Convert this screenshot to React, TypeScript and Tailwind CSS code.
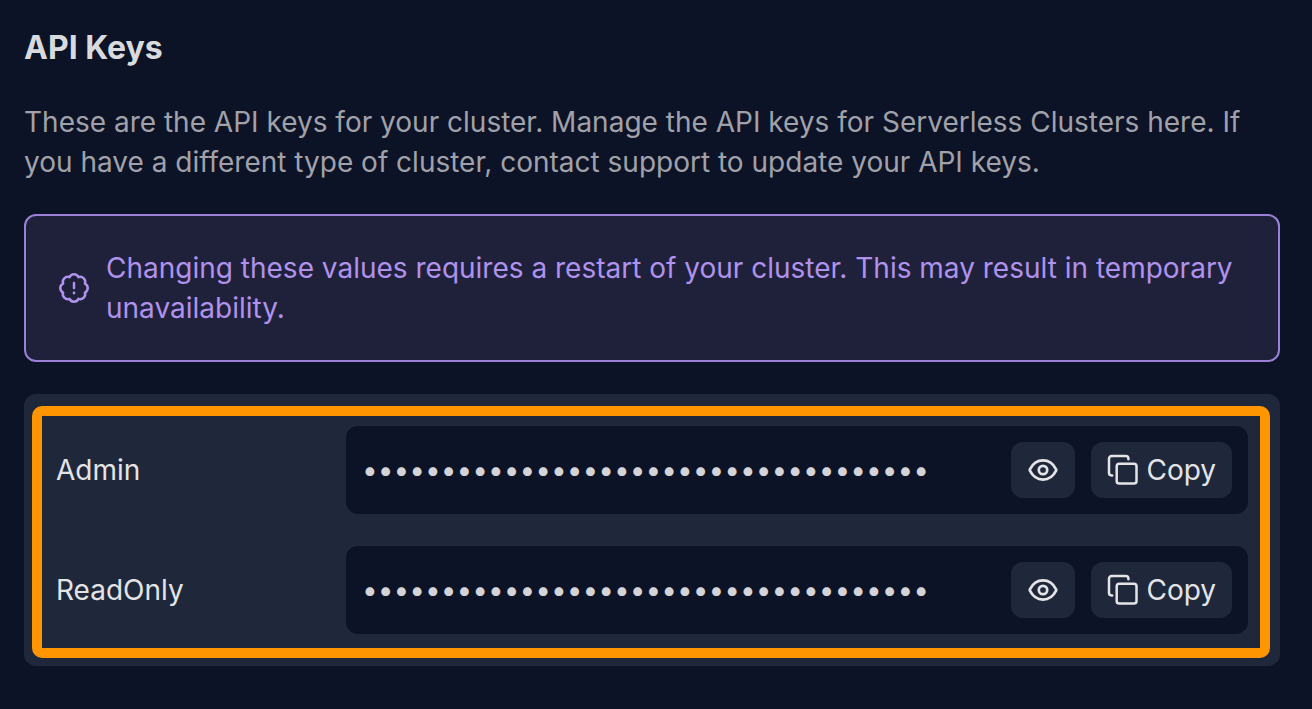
const API_KEYS = [
  { id: "admin", label: "Admin", value: "x".repeat(36) },
  { id: "readonly", label: "ReadOnly", value: "x".repeat(36) },
];

function AlertBadgeIcon() {
  return (
    <svg viewBox="-16 -16 32 32" className="size-8 shrink-0" fill="none" stroke="currentColor" strokeWidth="2.5" strokeLinecap="round" strokeLinejoin="round" aria-hidden="true">
      <path d="M-4.5-10.900A5 5 0 0 1 4.500-10.900A5 5 0 0 1 10.900-4.500A5 5 0 0 1 10.900 4.500A5 5 0 0 1 4.500 10.900A5 5 0 0 1-4.500 10.900A5 5 0 0 1-10.900 4.500A5 5 0 0 1-10.900-4.500A5 5 0 0 1-4.500-10.900Z" />
      <path d="M0-5V0" />
      <path d="M0 5V5.100" strokeWidth="2.8" />
    </svg>
  );
}

function EyeIcon() {
  return (
    <svg viewBox="0 0 32 32" className="size-8" fill="none" stroke="currentColor" strokeWidth="2.700" strokeLinecap="round" strokeLinejoin="round" aria-hidden="true">
      <path d="M2.900 16.700a1.800 1.800 0 0 1 0-1.400C5.600 9.900 10.400 6.400 16 6.400s10.400 3.500 13.100 8.900a1.800 1.800 0 0 1 0 1.400C26.400 22.100 21.600 25.600 16 25.600S5.600 22.100 2.900 16.700Z" />
      <circle cx="16" cy="16" r="4.200" />
    </svg>
  );
}

function CopyIcon() {
  return (
    <svg viewBox="0 0 32 32" className="size-8" fill="none" stroke="currentColor" strokeWidth="2.500" strokeLinecap="round" strokeLinejoin="round" aria-hidden="true">
      <rect x="9.700" y="9.700" width="19.800" height="19.800" rx="2.600" />
      <path d="M5.200 21.400H4.600A2.600 2.600 0 0 1 2 18.800V4.600A2.600 2.600 0 0 1 4.600 2H18.800A2.600 2.600 0 0 1 21.400 4.600V5.200" />
    </svg>
  );
}

function KeyRow({ id, label, value }: { id: string; label: string; value: string }) {
  return (
    <div className="flex items-center">
      <label htmlFor={id} className="w-[290px] shrink-0">
        {label}
      </label>
      <div className="flex min-w-0 flex-1 items-center gap-4 rounded-xl bg-[#0c1326] p-4">
        <input id={id} type="password" readOnly value={value} className="h-14 min-w-0 flex-1 bg-transparent text-[#d4d4d8] outline-none" />
        <button type="button" aria-label={`Show ${label} key`} className="flex h-14 w-16 shrink-0 items-center justify-center rounded-xl bg-[#1f283a]">
          <EyeIcon />
        </button>
        <button type="button" className="flex h-14 shrink-0 items-center gap-[7px] rounded-xl bg-[#1f283a] px-4">
          <CopyIcon />
          Copy
        </button>
      </div>
    </div>
  );
}

export default function App() {
  return (
    <main className="min-h-screen bg-[#0c1326] py-7 pr-8 pl-6 font-['Inter',sans-serif] text-[28px] leading-10 text-[#e4e4e7]">
      <h1 className="text-[32px] leading-10 font-bold text-[#d9dade]">API Keys</h1>
      <p className="mt-[34px] text-[#a1a1aa]">
        These are the API keys for your cluster. Manage the API keys for Serverless Clusters here. If you have a different type of cluster, contact support to update your API keys.
      </p>
      <div role="note" className="mt-8 flex items-center gap-4 rounded-xl border-2 border-[#9b80d8] bg-[#1f213b] p-8 text-[#b092ec]">
        <AlertBadgeIcon />
        <p>Changing these values requires a restart of your cluster. This may result in temporary unavailability.</p>
      </div>
      <section className="relative mt-8 flex flex-col gap-8 rounded-xl bg-[#1f283a] p-8">
        {API_KEYS.map((key) => (
          <KeyRow key={key.id} {...key} />
        ))}
        <div className="pointer-events-none absolute top-3 right-[10px] bottom-2 left-2 rounded-[10px] border-[10px] border-[#ff9500]" />
      </section>
    </main>
  );
}
